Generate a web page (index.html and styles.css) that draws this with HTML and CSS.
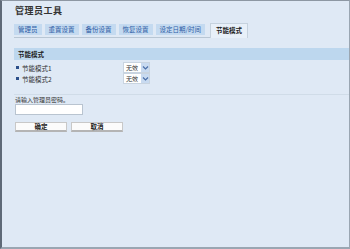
FILE: index.html
```html
<!DOCTYPE html>
<html lang="zh">
<head>
<meta charset="utf-8">
<link rel="stylesheet" href="styles.css">
</head>
<body>
<div class="frame">
  <h1 class="title">管理员工具</h1>
  <div class="tabs">
    <span class="tab">管理员</span>
    <span class="tab">重置设置</span>
    <span class="tab">备份设置</span>
    <span class="tab">恢复设置</span>
    <span class="tab">设定日期/时间</span>
    <span class="tab active">节能模式</span>
  </div>
  <div class="section">节能模式</div>
  <div class="rows">
    <div class="row"><span class="label"><i class="sq"></i>节能模式1</span><span class="sel"><span class="val">无效</span><span class="arr"><svg width="7" height="5" viewBox="0 0 7 5"><path d="M1 1.5 L3.5 4 L6 1.5" fill="none" stroke="#4a6fa8" stroke-width="1.2"/></svg></span></span></div>
    <div class="row"><span class="label"><i class="sq"></i>节能模式2</span><span class="sel"><span class="val">无效</span><span class="arr"><svg width="7" height="5" viewBox="0 0 7 5"><path d="M1 1.5 L3.5 4 L6 1.5" fill="none" stroke="#4a6fa8" stroke-width="1.2"/></svg></span></span></div>
  </div>
  <div class="divider"></div>
  <div class="pw">
    <div class="prompt">请输入管理员密码。</div>
    <div class="input"></div>
  </div>
  <div class="buttons">
    <span class="btn">确定</span>
    <span class="btn">取消</span>
  </div>
</div>
</body>
</html>
```
FILE: styles.css
```css
html, body {
  margin: 0;
  padding: 0;
  width: 350px;
  height: 249px;
  overflow: hidden;
}
body {
  font-family: "Noto Sans CJK SC", "Liberation Sans", sans-serif;
  background: #dfe9f5;
}
.frame {
  box-sizing: border-box;
  width: 350px;
  height: 249px;
  border-left: 2px solid #5f6a78;
  border-top: 1px solid #8d97a3;
  border-bottom: 2px solid #9aa6b2;
  border-right: 1px solid #9aa6b2;
  padding: 4px 0 0 12px;
  background: #dfe9f5;
}
.title {
  margin: 0 0 0 1px;
  font-size: 9px;
  font-weight: 700;
  line-height: 12px;
  color: #333;
  letter-spacing: 0.5px;
}
.tabs {
  display: flex;
  align-items: flex-end;
  gap: 3px;
  margin-top: 5px;
  width: 234px;
  border-bottom: 1px solid #b8c6d4;
  height: 15px;
}
.tab {
  display: block;
  background: #c4daf0;
  color: #2d5ca6;
  font-size: 6.5px;
  line-height: 11px;
  padding: 0 4px;
  margin-bottom: 2px;
  white-space: nowrap;
}
.tab.active {
  background: #e8f0f9;
  color: #222;
  font-weight: 700;
  border: 1px solid #c6d2de;
  border-bottom: none;
  line-height: 13px;
  margin-bottom: -1px;
  margin-left: 2px;
  padding: 0 5px 1px;
}
.section {
  margin-top: 10px;
  background: #bdd7ee;
  height: 12px;
  line-height: 12px;
  font-size: 6.5px;
  font-weight: 700;
  color: #222;
  padding-left: 4px;
}
.rows {
  padding-top: 2px;
}
.row {
  display: flex;
  align-items: center;
  height: 11px;
}
.label {
  width: 107px;
  font-size: 6.5px;
  color: #333;
  display: flex;
  align-items: center;
  padding-left: 2px;
}
.sq {
  display: inline-block;
  width: 3px;
  height: 3px;
  background: #2c4f8a;
  margin-right: 3px;
}
.sel {
  display: flex;
  align-items: stretch;
  height: 9px;
  border: 1px solid #c9d4e0;
  background: #fff;
}
.val {
  font-size: 6px;
  line-height: 9px;
  padding: 0 3px 0 2px;
  color: #333;
}
.arr {
  width: 8px;
  background: #c8daf0;
  display: flex;
  align-items: center;
  justify-content: center;
}
.divider {
  margin-top: 10px;
  height: 1px;
  background: #d0dce8;
}
.pw {
  padding-top: 1px;
}
.prompt {
  font-size: 6px;
  line-height: 8px;
  color: #333;
  padding-left: 1px;
}
.input {
  width: 66px;
  height: 9px;
  background: #fff;
  border: 1px solid #b9c4d0;
  margin-left: 1px;
}
.buttons {
  display: flex;
  gap: 4px;
  margin-top: 7px;
  padding-left: 1px;
}
.btn {
  display: block;
  width: 50px;
  height: 7px;
  line-height: 7px;
  text-align: center;
  font-size: 6.5px;
  font-weight: 700;
  color: #222;
  background: #fbfbfb;
  border: 1px solid #c8c8c8;
  border-bottom: 2px solid #b4b4b4;
}
```
